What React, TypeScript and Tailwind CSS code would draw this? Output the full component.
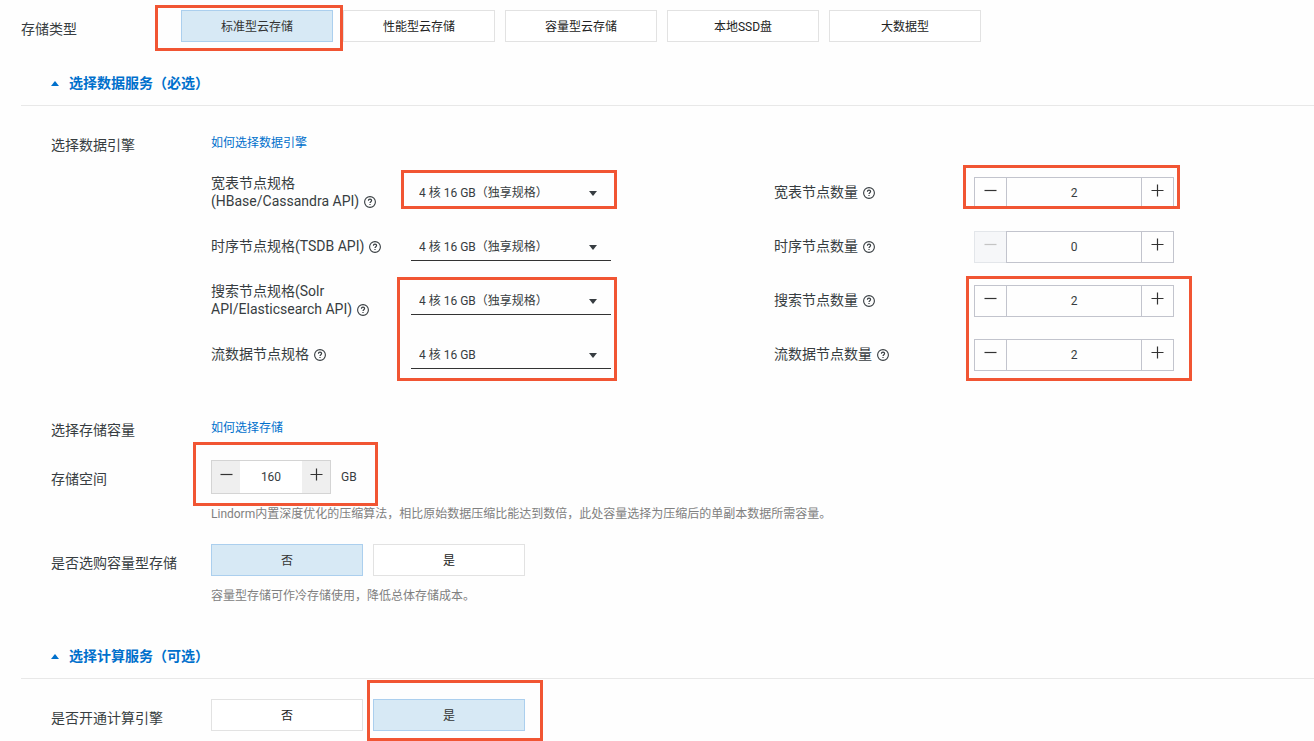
import { useState, type FC, type ReactNode } from "react";

const SPECS = ["4 核 16 GB（独享规格）", "8 核 32 GB（独享规格）", "16 核 64 GB（独享规格）"];

const ENGINES = [
    {
        id: "table",
        spec: "宽表节点规格\n(HBase/Cassandra API)",
        count: "宽表节点数量",
        options: SPECS,
        initial: 2,
        specMark: "-left-[10px] -top-[7px] -right-[6px] -bottom-[2px]",
        countMark: "-left-[11px] -top-[12px] -right-[6px] bottom-0",
    },
    {
        id: "tsdb",
        spec: "时序节点规格(TSDB API)",
        count: "时序节点数量",
        options: SPECS,
        initial: 0,
    },
    {
        id: "search",
        spec: "搜索节点规格(Solr\nAPI/Elasticsearch API)",
        count: "搜索节点数量",
        options: SPECS,
        initial: 2,
        // these two marks also cover the row below
        specMark: "-left-[14px] -top-[8px] -right-[6px] -bottom-[66px]",
        countMark: "-left-[8px] -top-[9px] -right-[18px] -bottom-16",
    },
    {
        id: "stream",
        spec: "流数据节点规格",
        count: "流数据节点数量",
        options: ["4 核 16 GB", "8 核 32 GB"],
        initial: 2,
    },
];

const Mark: FC<{ className: string }> = ({ className }) => (
    <span
        aria-hidden="true"
        className={`pointer-events-none absolute z-10 border-3 border-[#f15533] ${className}`}
    />
);

const HelpIcon: FC = () => (
    <svg
        viewBox="0 0 12 12"
        className="ml-[5px] inline-block size-3 align-[-2px] text-[#373d41]"
        fill="none"
        stroke="currentColor"
        aria-hidden="true"
    >
        <circle cx="6" cy="6" r="5.4" strokeWidth="1.1" />
        <path d="M4.4 4.8c0-1 .7-1.6 1.6-1.6s1.6.6 1.6 1.4c0 1.1-1.6 1.2-1.6 2.5M6 7.9v1.2" strokeWidth="1.2" />
    </svg>
);

const MinusIcon: FC = () => (
    <svg width="13" height="13" viewBox="0 0 13 13" stroke="currentColor" strokeWidth="1.2" aria-hidden="true">
        <path d="M.5 6.5h12" />
    </svg>
);

const PlusIcon: FC = () => (
    <svg width="13" height="13" viewBox="0 0 13 13" stroke="currentColor" strokeWidth="1.2" aria-hidden="true">
        <path d="M.5 6.5h12M6.5 .5v12" />
    </svg>
);

const SectionTitle: FC<{ children: ReactNode; className: string }> = ({ children, className }) => (
    <h2
        className={`flex h-11 items-center gap-[10px] border-b border-[#e8e8e8] pl-[30px] text-[14px] font-bold text-[#0070cc] ${className}`}
    >
        <svg width="8" height="5" viewBox="0 0 8 5" fill="currentColor" aria-hidden="true">
            <path d="M4 0L8 5H0z" />
        </svg>
        {children}
    </h2>
);

interface FieldProps {
    label: string;
    labelId?: string;
    htmlFor?: string;
    className?: string;
    children: ReactNode;
}

const Field: FC<FieldProps> = ({ label, labelId, htmlFor, className = "", children }) => (
    <div className={`flex items-start pl-[30px] ${className}`}>
        {htmlFor ? (
            <label htmlFor={htmlFor} className="w-[160px] shrink-0 pt-2 text-[14px] leading-[22px]">{label}</label>
        ) : (
            <span id={labelId} className="w-[160px] shrink-0 pt-2 text-[14px] leading-[22px]">{label}</span>
        )}
        <div className="min-w-0 flex-1">{children}</div>
    </div>
);

interface ChoicesProps {
    labelId: string;
    options: string[];
    initial: number;
    marked?: number;
    markClass?: string;
}

const Choices: FC<ChoicesProps> = ({ labelId, options, initial, marked, markClass = "" }) => {
    const [active, setActive] = useState(initial);

    return (
        <div role="group" aria-labelledby={labelId} className="flex flex-wrap gap-[10px]">
            {options.map((option, i) => (
                <div key={option} className="relative">
                    <button
                        type="button"
                        aria-pressed={active === i}
                        onClick={() => setActive(i)}
                        className={`block h-8 w-[152px] border pt-[2px] text-[12px] ${
                            active === i
                                ? "border-[#abcfee] bg-[#d7e9f5] text-[#333]"
                                : "border-[#e2e2e2] bg-white text-[#222]"
                        }`}
                    >
                        {option}
                    </button>
                    {marked === i && <Mark className={markClass} />}
                </div>
            ))}
        </div>
    );
};

const CountStepper: FC<{ id: string; initial: number }> = ({ id, initial }) => {
    const [value, setValue] = useState(initial);

    return (
        <div className="flex h-8 w-[200px]">
            <button
                type="button"
                aria-label="减少"
                disabled={value === 0}
                onClick={() => setValue(value - 1)}
                className="flex w-8 items-center justify-center border border-r-0 border-[#c2c4cd] pb-[5px] text-[#333] disabled:border-[#e3e6ea] disabled:bg-[#f6f7f9] disabled:text-[#c4c4c4]"
            >
                <MinusIcon />
            </button>
            <input
                id={id}
                type="text"
                inputMode="numeric"
                value={value}
                onChange={(e) => setValue(Number(e.target.value) || 0)}
                className="min-w-0 flex-1 border border-[#c2c4cd] text-center text-[12px] outline-none"
            />
            <button
                type="button"
                aria-label="增加"
                onClick={() => setValue(value + 1)}
                className="flex w-8 items-center justify-center border border-l-0 border-[#c2c4cd] pb-[5px] text-[#333]"
            >
                <PlusIcon />
            </button>
        </div>
    );
};

const StorageStepper: FC = () => {
    const [value, setValue] = useState(160);

    return (
        <div className="relative flex h-[34px] w-[120px] border border-[#d4d4d4]">
            <button
                type="button"
                aria-label="减少"
                onClick={() => setValue(Math.max(0, value - 10))}
                className="flex w-7 items-center justify-center bg-[#efefef] pb-[5px] text-[#333]"
            >
                <MinusIcon />
            </button>
            <input
                id="storage"
                type="text"
                inputMode="numeric"
                value={value}
                onChange={(e) => setValue(Number(e.target.value) || 0)}
                className="min-w-0 flex-1 bg-white text-center text-[12px] outline-none"
            />
            <button
                type="button"
                aria-label="增加"
                onClick={() => setValue(value + 10)}
                className="flex w-7 items-center justify-center bg-[#efefef] pb-[5px] text-[#333]"
            >
                <PlusIcon />
            </button>
            <Mark className="-left-[19px] -top-[19px] -right-12 -bottom-[13px]" />
        </div>
    );
};

export default function App() {
    return (
        <main className="overflow-x-hidden bg-[#fefefe] pt-[10px] pb-[10px] pl-[21px] font-['Roboto','Noto_Sans_CJK_SC',sans-serif] text-[#373d41]">
            <div className="flex items-start">
                <span id="disk-label" className="w-[160px] shrink-0 pt-2 text-[14px] leading-[22px]">存储类型</span>
                <Choices
                    labelId="disk-label"
                    options={["标准型云存储", "性能型云存储", "容量型云存储", "本地SSD盘", "大数据型"]}
                    initial={0}
                    marked={0}
                    markClass="-left-[26px] -top-[5px] -right-[10px] -bottom-[9px]"
                />
            </div>

            <SectionTitle className="mt-5">选择数据服务（必选）</SectionTitle>

            <Field label="选择数据引擎" className="mt-5">
                <a href="#engine" className="block w-fit text-[12px] leading-[34px] text-[#0070cc]">如何选择数据引擎</a>
                <div className="mt-[5px]">
                    {ENGINES.map((item) => (
                        <div key={item.id} className="flex h-[54px] items-start pt-3">
                            <div className="flex w-[563px]">
                                <label
                                    htmlFor={`${item.id}-spec`}
                                    className="flex h-[30px] w-[200px] items-center text-[14px] leading-[18px]"
                                >
                                    <span className="whitespace-pre-line">
                                        {item.spec}
                                        <HelpIcon />
                                    </span>
                                </label>
                                <div className="relative w-[200px]">
                                    <select
                                        id={`${item.id}-spec`}
                                        className="h-[30px] w-full appearance-none border-b border-[#333] pt-[2px] pr-8 pl-2 text-[12px] outline-none"
                                    >
                                        {item.options.map((option) => (
                                            <option key={option}>{option}</option>
                                        ))}
                                    </select>
                                    <svg
                                        viewBox="0 0 8 5"
                                        fill="currentColor"
                                        aria-hidden="true"
                                        className="pointer-events-none absolute top-[14px] right-[14px] h-[5px] w-2"
                                    >
                                        <path d="M0 0h8L4 5z" />
                                    </svg>
                                    {item.specMark && <Mark className={item.specMark} />}
                                </div>
                            </div>
                            <label
                                htmlFor={`${item.id}-count`}
                                className="flex h-[30px] w-[200px] items-center text-[14px] leading-[18px]"
                            >
                                <span>
                                    {item.count}
                                    <HelpIcon />
                                </span>
                            </label>
                            <div className="relative">
                                <CountStepper id={`${item.id}-count`} initial={item.initial} />
                                {item.countMark && <Mark className={item.countMark} />}
                            </div>
                        </div>
                    ))}
                </div>
            </Field>

            <Field label="选择存储容量" className="mt-[30px]">
                <a href="#storage" className="block w-fit text-[12px] leading-[34px] text-[#0070cc]">如何选择存储</a>
            </Field>

            <Field label="存储空间" htmlFor="storage" className="mt-[15px]">
                <div className="flex items-center gap-[10px] text-[12px]">
                    <StorageStepper />
                    <span>GB</span>
                </div>
                <p className="mt-[10px] text-[12px] leading-5 text-[#808080]">
                    Lindorm内置深度优化的压缩算法，相比原始数据压缩比能达到数倍，此处容量选择为压缩后的单副本数据所需容量。
                </p>
            </Field>

            <Field label="是否选购容量型存储" labelId="cold-label" className="mt-5">
                <Choices labelId="cold-label" options={["否", "是"]} initial={0} />
                <p className="mt-[10px] text-[12px] leading-5 text-[#808080]">
                    容量型存储可作冷存储使用，降低总体存储成本。
                </p>
            </Field>

            <SectionTitle className="mt-[29px]">选择计算服务（可选）</SectionTitle>

            <Field label="是否开通计算引擎" labelId="compute-label" className="mt-5">
                <Choices
                    labelId="compute-label"
                    options={["否", "是"]}
                    initial={1}
                    marked={1}
                    markClass="-left-[6px] -top-[19px] -right-[18px] -bottom-[10px]"
                />
            </Field>
        </main>
    );
}
